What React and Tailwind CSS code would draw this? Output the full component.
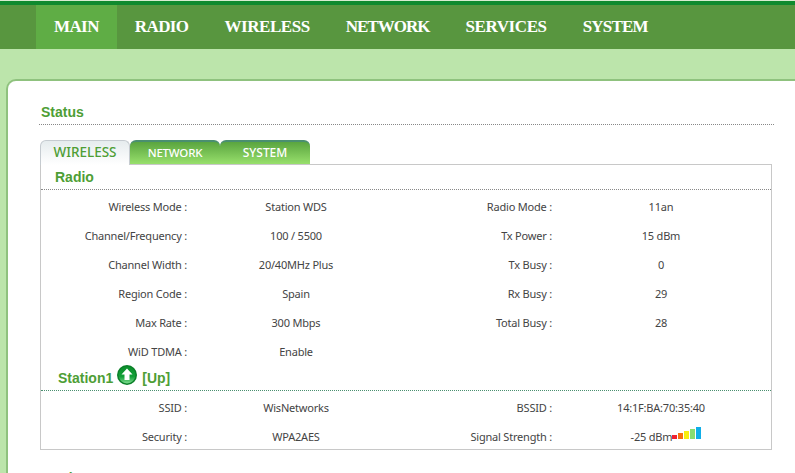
const navItems = [
  { name: "MAIN", cls: "tracking-[-0.6px] bg-[#5fad45]" },
  { name: "RADIO", cls: "tracking-[-0.6px]" },
  { name: "WIRELESS", cls: "tracking-[-0.45px]" },
  { name: "NETWORK", cls: "tracking-[-1px]" },
  { name: "SERVICES", cls: "tracking-[-0.4px]" },
  { name: "SYSTEM", cls: "tracking-[-0.8px]" },
];

const radioRows = [
  ["Wireless Mode :", "Station WDS", "Radio Mode :", "11an"],
  ["Channel/Frequency :", "100 / 5500", "Tx Power :", "15 dBm"],
  ["Channel Width :", "20/40MHz Plus", "Tx Busy :", "0"],
  ["Region Code :", "Spain", "Rx Busy :", "29"],
  ["Max Rate :", "300 Mbps", "Total Busy :", "28"],
  ["WiD TDMA :", "Enable", "", ""],
];

function SignalBars() {
  return (
    <span className="flex items-end gap-[1px] mb-[10px]">
      <span className="w-[5px] h-[4px] bg-[#f02030]" />
      <span className="w-[5px] h-[6px] bg-[#f77010]" />
      <span className="w-[5px] h-[8px] bg-[#f8ee10]" />
      <span className="w-[5px] h-[10px] bg-[#88dd70]" />
      <span className="w-[5px] h-[12px] bg-[#10aee8]" />
    </span>
  );
}

function Row({ cells, signal }) {
  return (
    <div className="grid grid-cols-[146px_218px_147px_218px] h-[29px] items-center text-[11px] tracking-[-0.2px] text-[#444]">
      <div className="text-right">{cells[0]}</div>
      <div className="text-center">{cells[1]}</div>
      <div className="text-right">{cells[2]}</div>
      {signal ? (
        <div className="flex items-center justify-center pl-[10px]">
          {cells[3]}
          <SignalBars />
        </div>
      ) : (
        <div className="text-center">{cells[3]}</div>
      )}
    </div>
  );
}

function UpIcon() {
  return (
    <svg width="20" height="20" viewBox="0 0 20 20" className="ml-[4px] mr-[5px] mb-[8px]">
      <defs>
        <linearGradient id="upFill" x1="0" y1="0" x2="0" y2="1">
          <stop offset="0" stopColor="#0c8f2c" />
          <stop offset="0.6" stopColor="#12a038" />
          <stop offset="1" stopColor="#7fdc8f" />
        </linearGradient>
      </defs>
      <circle cx="10" cy="10" r="10" fill="#0a7f28" />
      <circle cx="10" cy="10" r="8.5" fill="url(#upFill)" />
      <path d="M10 3.5 L15.5 9.5 H12.5 V15 H7.5 V9.5 H4.5 Z" fill="#fff" />
    </svg>
  );
}

export default function App() {
  return (
    <div className="w-[795px] h-[473px] overflow-hidden bg-[#bce5ab] font-['Noto_Sans',sans-serif]">
      <div className="h-[1px] bg-[#d8ecd0]" />
      <div className="h-[4px] bg-[#0f8a2e]" />
      <nav className="h-[44px] bg-[#58963f] pl-[36px] flex">
        {navItems.map((item) => (
          <div
            key={item.name}
            className={`${item.cls} px-[18px] flex items-center text-white font-bold text-[17px] font-['Liberation_Serif',serif]`}
          >
            {item.name}
          </div>
        ))}
      </nav>
      <div className="mt-[30px] ml-[6px] h-[400px] bg-white border-l-[2px] border-t-[2px] border-[#8fc27e] rounded-tl-[10px] pl-[31px] pt-[21px]">
        <h2 className="h-[22px] pl-[2px] text-[14px] leading-[20px] font-bold text-[#4e9e35] font-['Liberation_Sans',sans-serif]">
          Status
        </h2>
        <div className="w-[735px] border-t border-dotted border-[#888]" />

        <div className="mt-[14px] ml-[1px] h-[25px] flex items-end">
          <div className="w-[90px] h-[25px] rounded-t-[6px] border border-b-0 border-[#c5cbd0] bg-gradient-to-b from-[#e6ecee] to-white text-center text-[13.5px] leading-[23px] font-medium text-[#4e9e35] relative z-10 -mb-[1px]">
            WIRELESS
          </div>
          <div className="w-[90px] h-[24px] rounded-t-[6px] border-t-2 border-[#4a8f70] bg-gradient-to-b from-[#5aa53f] to-[#98e06c] text-center text-[11.5px] tracking-[-0.2px] leading-[22px] font-medium text-white">
            NETWORK
          </div>
          <div className="w-[90px] h-[24px] rounded-t-[6px] border-t-2 border-[#4a8f70] bg-gradient-to-b from-[#5aa53f] to-[#98e06c] text-center text-[12px] leading-[22px] font-medium text-white">
            SYSTEM
          </div>
        </div>

        <div className="ml-[1px] w-[732px] h-[286px] border border-[#c8c8c8]">
          <h3 className="h-[24px] pl-[14px] text-[14px] leading-[25px] font-bold text-[#4e9e35] font-['Liberation_Sans',sans-serif]">
            Radio
          </h3>
          <div className="border-t border-dotted border-[#888] pt-[3px]">
            {radioRows.map((r) => (
              <Row key={r[0]} cells={r} />
            ))}
          </div>
          <div className="h-[23px] pl-[17px] flex items-center text-[14px] font-bold text-[#4e9e35] font-['Liberation_Sans',sans-serif]">
            Station1
            <UpIcon />
            [Up]
          </div>
          <div className="border-t border-dotted border-[#4a8f70] pt-[3px] h-[59px]">
            <Row cells={["SSID :", "WisNetworks", "BSSID :", "14:1F:BA:70:35:40"]} />
            <Row cells={["Security :", "WPA2AES", "Signal Strength :", "-25 dBm"]} signal />
          </div>
        </div>

        <h2 className="mt-[18px] pl-[1px] text-[14px] leading-[20px] font-bold text-[#4e9e35] font-['Liberation_Sans',sans-serif]">
          Monitor
        </h2>
      </div>
    </div>
  );
}
